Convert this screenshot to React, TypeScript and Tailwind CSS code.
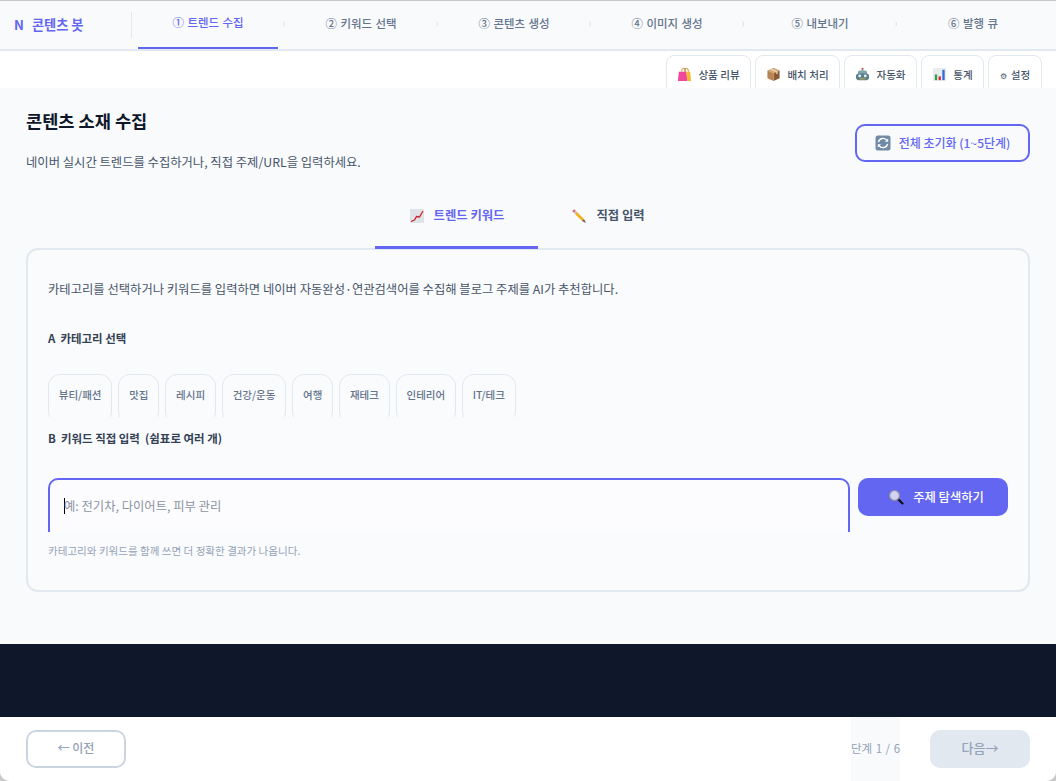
import type { ReactNode } from "react";

const STEPS = ["① 트렌드 수집", "② 키워드 선택", "③ 콘텐츠 생성", "④ 이미지 생성", "⑤ 내보내기", "⑥ 발행 큐"];
const CATEGORIES = ["뷰티/패션", "맛집", "레시피", "건강/운동", "여행", "재테크", "인테리어", "IT/테크"];

function BagIcon() {
  return (
    <svg viewBox="0 0 16 16" className="w-[15px] h-[15px]">
      <path d="M5 5V3.5a2 2 0 0 1 4 0V5M8 5V3.5a2 2 0 0 1 4 0V5" fill="none" stroke="#c98a2b" strokeWidth="1" />
      <path d="M2 5h8l1 10H1z" fill="#f0479b" />
      <path d="M10 5h4l1 10h-4z" fill="#f4b92e" />
    </svg>
  );
}

function BoxIcon() {
  return (
    <svg viewBox="0 0 16 16" className="w-[15px] h-[15px]">
      <path d="M8 1l6.5 3v8L8 15z" fill="#8a5a30" />
      <path d="M8 1L1.5 4v8L8 15z" fill="#b98455" />
      <path d="M1.5 4L8 7l6.5-3L8 1z" fill="#d3a878" />
      <path d="M4.5 2.6L11 5.6v2.2l1.4-.7V4.9L6 1.9z" fill="#eed9b8" />
    </svg>
  );
}

function RobotIcon() {
  return (
    <svg viewBox="0 0 16 16" className="w-[15px] h-[15px]">
      <circle cx="8" cy="2" r="1.2" fill="#d2553f" />
      <rect x="7.5" y="2" width="1" height="3" fill="#7d8d96" />
      <ellipse cx="8" cy="6" rx="5" ry="2.5" fill="#7fa3ad" />
      <rect x="1" y="7" width="14" height="7" rx="3" fill="#57808d" />
      <circle cx="5" cy="9.5" r="1.5" fill="#e9eef0" />
      <circle cx="11" cy="9.5" r="1.5" fill="#e9eef0" />
      <rect x="5" y="12" width="6" height="1.2" fill="#c9a24a" />
    </svg>
  );
}

function ChartIcon() {
  return (
    <svg viewBox="0 0 16 16" className="w-[15px] h-[15px]">
      <rect x="1" y="1" width="14" height="14" fill="#e9edf1" />
      <rect x="3" y="8" width="2.5" height="6" fill="#2f9e44" />
      <rect x="7" y="10" width="2.5" height="4" fill="#d92d3a" />
      <rect x="11" y="3" width="2.5" height="11" fill="#2f6fd6" />
    </svg>
  );
}

function TrendIcon() {
  return (
    <svg viewBox="0 0 16 16" className="w-4 h-4">
      <rect x="1" y="1" width="14" height="14" fill="#dfe3e8" />
      <path d="M2 13.5l3.5-1.5 2-3.5 3 .5L14 3" fill="none" stroke="#c8232c" strokeWidth="1.3" />
    </svg>
  );
}

function PencilIcon() {
  return (
    <svg viewBox="0 0 16 16" className="w-4 h-4">
      <path d="M3.2 1.2l-2 2 1.6 1.6 2-2z" fill="#e2607a" />
      <path d="M4.8 2.8l-2 2 1.2 1.2 2-2z" fill="#b9c0c7" />
      <path d="M6 4l-2 2 7 7 2-2z" fill="#f2b01e" />
      <path d="M11 13l2-2 2 4z" fill="#6b5a48" />
    </svg>
  );
}

function ResetIcon() {
  return (
    <svg viewBox="0 0 16 16" className="w-4 h-4">
      <rect x="0.5" y="0.5" width="15" height="15" rx="2.5" fill="#6f8ba5" />
      <path d="M3.4 7.2a4.7 4.7 0 0 1 8.6-1.6M12.6 8.8a4.7 4.7 0 0 1-8.6 1.6" fill="none" stroke="#fff" strokeWidth="1.4" />
      <path d="M13.2 3.6v3.2H10zM2.8 12.4V9.2H6z" fill="#fff" />
    </svg>
  );
}

function SearchIcon() {
  return (
    <svg viewBox="0 0 16 16" className="w-4 h-4">
      <path d="M10 10l4.5 4.5" stroke="#111" strokeWidth="2.2" strokeLinecap="round" />
      <circle cx="6.5" cy="6.5" r="5" fill="#cfd2f2" stroke="#8b8d9c" strokeWidth="1.2" />
    </svg>
  );
}

function ChevronIcon() {
  return (
    <span className="w-[13px] pb-[2px] flex justify-center">
      <svg viewBox="0 0 4 7" className="w-[3px] h-[6px]">
        <path d="M1 .5Q3.5 3.5 1 6.5" fill="none" stroke="#cbd5e1" strokeWidth="0.8" />
      </svg>
    </span>
  );
}

function ToolTab({ icon, children, className }: { icon?: ReactNode; children: ReactNode; className: string }) {
  return (
    <button className={`h-[40px] shrink-0 flex items-start justify-center gap-[6px] pt-[11px] rounded-lg border border-[#e2e8f0] bg-white text-[10.56px] font-medium text-[#475569] ${className}`}>
      {icon}
      <span className="leading-[15px]">{children}</span>
    </button>
  );
}

export default function App() {
  return (
    <div className="w-[1056px] h-[781px] overflow-hidden bg-[#c9c9c9] pt-px font-['Noto_Sans_CJK_KR',sans-serif]">
      <div className="h-[780px] flex flex-col overflow-hidden rounded-b-[10px] bg-white">
        {/* Stepper */}
        <header className="h-[50px] shrink-0 flex items-center bg-[#f8fafc] border-b-2 border-[#e2e8f0]">
          <div className="w-[132px] h-[26px] shrink-0 pl-[14px] flex items-center gap-[8px] border-r border-[#e2e8f0] text-[13.2px] font-bold text-[#6366f1]">
            <span>N</span>
            <span>콘텐츠 봇</span>
          </div>
          <nav className="ml-[6px] flex items-center h-full">
            {STEPS.map((step, i) => (
              <div key={step} className="flex items-center h-full">
                <div className={`w-[140px] h-full pb-[2px] flex items-center justify-center text-[11.44px] font-medium [word-spacing:1px] ${i === 0 ? "text-[#6366f1] border-b-2 border-[#6366f1]" : "text-[#64748b]"}`}>
                  {step}
                </div>
                {i < 5 && <ChevronIcon />}
              </div>
            ))}
          </nav>
        </header>

        {/* Tool tabs */}
        <div className="h-[37px] shrink-0 overflow-hidden flex justify-end gap-[4px] pt-[4px] pr-[14px] bg-white">
          <ToolTab icon={<BagIcon />} className="w-[85px]">상품 리뷰</ToolTab>
          <ToolTab icon={<BoxIcon />} className="w-[85px]">배치 처리</ToolTab>
          <ToolTab icon={<RobotIcon />} className="w-[73px]">자동화</ToolTab>
          <ToolTab icon={<ChartIcon />} className="w-[63px]">통계</ToolTab>
          <ToolTab className="w-[54px]"><span className="text-[8px] mr-[4px]">⚙</span>설정</ToolTab>
        </div>

        {/* Main */}
        <main className="h-[556px] shrink-0 bg-[#f8fafc] px-[26px]">
          <div className="flex justify-between items-start">
            <div>
              <h1 className="mt-[20px] text-[17.6px] leading-[26px] font-bold text-[#0f172a]">콘텐츠 소재 수집</h1>
              <p className="mt-[18px] text-[12.32px] leading-[20px] text-[#475569]">네이버 실시간 트렌드를 수집하거나, 직접 주제/URL을 입력하세요.</p>
            </div>
            <button className="mt-[36px] w-[175px] h-[38px] pb-px flex items-center justify-center gap-[8px] rounded-[10px] border-2 border-[#6366f1] text-[12px] font-medium text-[#6366f1]">
              <ResetIcon />
              전체 초기화 (1~5단계)
            </button>
          </div>

          <div className="mt-[26px] h-[52px] flex justify-center relative z-10 -mb-[2px] pr-[3px]">
            <div className="w-[163px] h-[51px] pb-[13px] flex items-center justify-center gap-[9px] border-b-[3px] border-[#6366f1] text-[12.32px] font-bold text-[#6366f1]">
              <TrendIcon />
              트렌드 키워드
            </div>
            <div className="w-[140px] h-[51px] pb-[15px] flex items-center justify-center gap-[9px] border-b border-[#e2e8f0] bg-[#f8fafc] text-[12.32px] font-semibold text-[#475569]">
              <PencilIcon />
              직접 입력
            </div>
          </div>

          <section className="h-[344px] rounded-xl border-2 border-[#e2e8f0] bg-[#fafbfd] px-[20px]">
            <p className="mt-[29px] text-[12.32px] leading-[20px] text-[#475569]">
              카테고리를 선택하거나 키워드를 입력하면 네이버 자동완성·연관검색어를 수집해 블로그 주제를 AI가 추천합니다.
            </p>
            <h2 className="mt-[29px] text-[11.44px] leading-[20px] font-bold text-[#334155]">A&nbsp;&nbsp;카테고리 선택</h2>

            <div className="mt-[26px] h-[43px] overflow-hidden flex gap-[6px]">
              {CATEGORIES.map((c) => (
                <button key={c} className="h-[50px] shrink-0 px-[9.8px] pb-[8px] rounded-xl border border-[#e2e8f0] bg-[#fafbfd] text-[10.5px] font-medium text-[#64748b]">
                  {c}
                </button>
              ))}
            </div>

            <h2 className="mt-[11px] text-[11.44px] leading-[20px] font-bold text-[#334155]">B&nbsp;&nbsp;키워드 직접 입력&nbsp;&nbsp;(쉼표로 여러 개)</h2>

            <div className="mt-[30px] flex gap-[8px] items-start">
              <div className="w-[802px] h-[54px] overflow-hidden">
                <div className="h-[70px] rounded-[10px] border-2 border-[#6366f1] bg-[#fcfcfe] pl-[14px] pt-[16px] flex items-start">
                  <span className="w-px h-[16px] mt-[2px] -mr-px bg-black" />
                  <input
                    placeholder="예: 전기차, 다이어트, 피부 관리"
                    className="w-full h-[20px] bg-transparent outline-none text-[12.32px] text-[#334155] placeholder:text-[#8b93a1]"
                  />
                </div>
              </div>
              <button className="w-[150px] h-[38px] pl-[6px] flex items-center justify-center gap-[9px] rounded-[10px] bg-[#6366f1] text-[12.32px] font-medium text-white">
                <SearchIcon />
                주제 탐색하기
              </button>
            </div>
            <p className="mt-[10px] text-[10.56px] leading-[18px] text-[#94a3b8]">카테고리와 키워드를 함께 쓰면 더 정확한 결과가 나옵니다.</p>
          </section>
        </main>

        {/* Dark strip */}
        <div className="h-[73px] shrink-0 bg-[#0f172a]" />

        {/* Footer */}
        <footer className="h-[64px] shrink-0 flex bg-white pl-[26px] pr-[26px]">
          <button className="mt-[13px] w-[100px] h-[38px] pb-[2px] rounded-[10px] border-2 border-[#cbd5e1] bg-white text-[12px] font-medium text-[#94a3b8]">
            ← 이전
          </button>
          <div className="ml-auto w-[49px] h-full bg-[#f8fafc] flex pt-[23px] justify-center text-[11.5px] leading-[16px] whitespace-nowrap text-[#94a3b8] [word-spacing:1px]">
            단계 1 / 6
          </div>
          <button className="ml-[30px] mt-[13px] w-[100px] h-[38px] pb-[2px] rounded-[10px] bg-[#e2e8f0] text-[13px] font-medium text-[#94a3b8]">
            다음→
          </button>
        </footer>
      </div>
    </div>
  );
}
